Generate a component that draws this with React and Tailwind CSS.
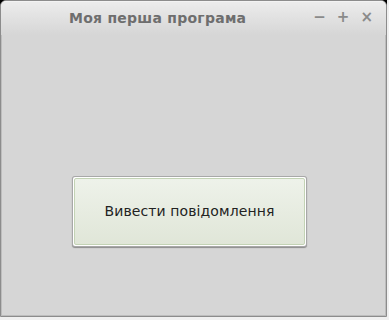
export default function App() {
  return (
    <div className="w-[389px] h-[320px] bg-[#f0f0f0] relative overflow-hidden">
      <div className="absolute left-0 top-0 w-[8px] h-[8px] bg-black" />
      <div className="absolute left-[379px] top-0 w-[8px] h-[8px] bg-black" />
      <div
        className="relative w-[387px] h-[317px] rounded-t-[6px] border border-[#8c8c8c] bg-[#d6d6d6] flex flex-col overflow-hidden"
        style={{ fontFamily: '"DejaVu Sans", sans-serif' }}
      >
        <div className="h-[34px] shrink-0 bg-gradient-to-b from-[#ececec] to-[#d6d6d6] flex items-center border-t border-white/70">
          <div className="w-[68px]" />
          <div className="text-[14px] font-bold text-[#6e6e6e] leading-none -mt-[2px] tracking-[0.25px]">Моя перша програма</div>
          <div className="flex-1" />
          <div className="flex items-center gap-[11px] mr-[13px] -mt-[2px] text-[#8a8a8a] font-bold text-[15px] leading-none">
            <span>−</span>
            <span>+</span>
            <span>×</span>
          </div>
        </div>
        <div className="flex-1 border-x border-b border-[#bdbdbd] flex flex-col">
          <div className="h-[141px]" />
          <div className="ml-[70px] w-[235px] h-[71px] rounded-[3px] bg-[#a8a8a8] p-px shadow-[0_1px_1px_rgba(0,0,0,0.35)]">
            <div className="w-full h-full rounded-[2px] bg-white p-px">
              <div className="w-full h-full rounded-[2px] border border-[#c3d3b5] bg-gradient-to-b from-[#eef2ea] to-[#e0e6d8] flex items-center justify-center text-[14px] text-[#222] tracking-[0.1px]">
                Вивести повідомлення
              </div>
            </div>
          </div>
        </div>
      </div>
    </div>
  );
}
